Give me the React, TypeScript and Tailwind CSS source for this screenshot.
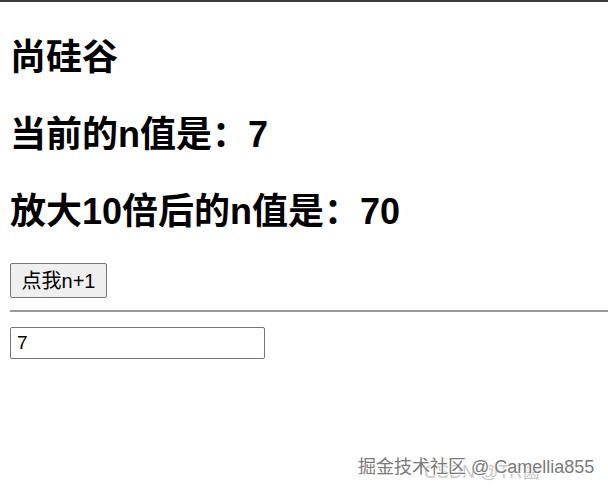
import React, { useState } from 'react'

export default function App() {
  const [n, setN] = useState(7)

  return (
    <div
      className="relative w-[608px] h-[493px] bg-white text-black overflow-hidden"
      style={{ fontFamily: '"Liberation Sans", "Noto Sans CJK SC", sans-serif' }}
    >
      <div className="h-[2px] bg-[#3c3c3c]" />
      <div className="flex flex-col pl-[10px] pt-[34px]">
        <h1 className="text-[36px] leading-[44px] font-bold">尚硅谷</h1>
        <h1 className="mt-[33px] text-[36px] leading-[44px] font-bold">当前的n值是：{n}</h1>
        <h1 className="mt-[33px] text-[36px] leading-[44px] font-bold">放大10倍后的n值是：{n * 10}</h1>
        <div className="mt-[29px]">
          <button
            onClick={() => setN(n + 1)}
            className="h-[35px] w-[97px] border border-[#767676] rounded-[2px] bg-[#efefef] text-[20px] text-black"
          >
            点我n+1
          </button>
        </div>
      </div>
      <div className="mt-[12px] ml-[10px] border-t-2 border-[#9a9a9a]" />
      <div className="pl-[10px] pt-[15px]">
        <input
          value={n}
          onChange={(e) => setN(Number(e.target.value) || 0)}
          className="h-[32px] w-[255px] border border-[#767676] rounded-[2px] px-[6px] text-[19px] outline-none"
        />
      </div>

      {/* watermarks */}
      <div
        className="absolute left-[424px] top-[463px] text-[18px] text-[#c8c8c8] leading-none"
        style={{ textShadow: '0 0 1px #fff' }}
      >
        CSDN @TR菌
      </div>
      <div
        className="absolute left-[358px] top-[458px] text-[18px] text-[#7a7a7a] leading-none whitespace-nowrap"
        style={{ textShadow: '1px 1px 0 #fff, -1px -1px 0 #fff' }}
      >
        掘金技术社区 @ Camellia855
      </div>
    </div>
  )
}
